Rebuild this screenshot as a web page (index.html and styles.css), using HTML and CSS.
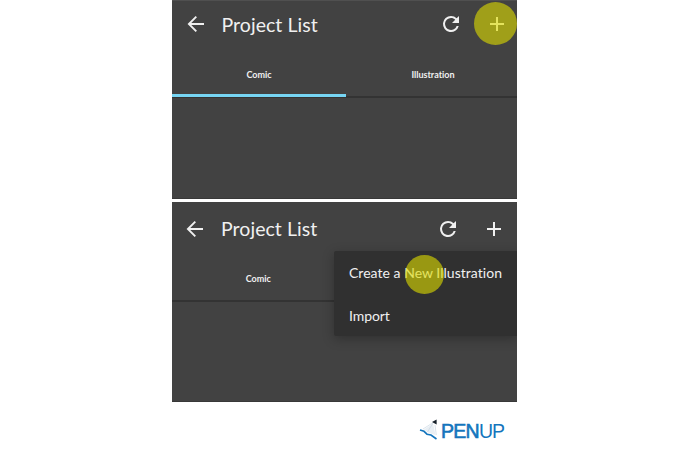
FILE: index.html
```html
<!DOCTYPE html>
<html lang="en">
<head>
<meta charset="utf-8">
<title>Project List</title>
<link rel="stylesheet" href="styles.css">
</head>
<body>
<svg width="0" height="0" class="defs">
  <symbol id="back" viewBox="0 0 24 24"><path d="M20 12H5M12.3 4.6L4.9 12l7.4 7.4" fill="none" stroke="currentColor" stroke-width="1.9"/></symbol>
  <symbol id="refresh" viewBox="0 0 24 24"><path fill="currentColor" d="M17.65 6.35A7.96 7.96 0 0 0 12 4a8 8 0 1 0 7.73 10h-2.08A6 6 0 1 1 12 6c1.66 0 3.14.69 4.22 1.78L13 11h7V4z"/></symbol>
  <symbol id="add" viewBox="0 0 24 24"><path d="M12 5v14M5 12h14" fill="none" stroke="currentColor" stroke-width="2"/></symbol>
</svg>
<main class="page">
  <section class="panel">
    <header class="bar">
      <svg class="icon"><use href="#back"/></svg>
      <h1 class="title">Project List</h1>
      <svg class="icon refresh"><use href="#refresh"/></svg>
      <span class="action"><svg class="icon"><use href="#add"/></svg><i class="touch touch-add"></i></span>
    </header>
    <nav class="tabs">
      <span class="tab active">Comic</span>
      <span class="tab">Illustration</span>
    </nav>
  </section>
  <section class="panel second">
    <header class="bar">
      <svg class="icon"><use href="#back"/></svg>
      <h1 class="title">Project List</h1>
      <svg class="icon refresh"><use href="#refresh"/></svg>
      <span class="action"><svg class="icon"><use href="#add"/></svg></span>
    </header>
    <nav class="tabs">
      <span class="tab">Comic</span>
      <span class="tab"></span>
    </nav>
    <div class="menu">
      <span class="item create">Create a New Illustration</span>
      <span class="item import">Import</span>
      <i class="touch touch-menu"></i>
    </div>
  </section>
  <footer class="brand">
    <svg class="logo" viewBox="0 0 20 22" width="20" height="22">
      <path d="M5 11.5L14 5.5L16.5 17L10 15Z" fill="#e9eff4"/>
      <path d="M14 5L8.5 14M13.5 5L4 11" stroke="#c3d2df" stroke-width=".6" fill="none"/>
      <path d="M16 7L17.3 17" stroke="#c3d2df" stroke-width=".6"/>
      <path d="M1 12L5 13.3L8 16.2L12 17L17.5 21" stroke="#1475bd" stroke-width="1.6" fill="none"/>
      <path d="M13 4L17.6 1.6V6.4Z" fill="#16202a"/>
    </svg>
    <span class="wordmark"><span class="pen">PEN</span>UP</span>
  </footer>
</main>
</body>
</html>
```
FILE: styles.css
```css
* { box-sizing: border-box; }
body {
  margin: 0;
  background: #fff;
  font-family: Lato, "Open Sans", sans-serif;
  font-variant-ligatures: none;
  color: #f0f0f0;
}
.defs { position: absolute; }
.page {
  width: 345px;
  height: 453px;
  margin-left: 172px;
  display: flex;
  flex-direction: column;
  gap: 3px;
}
.panel {
  position: relative;
  flex: none;
  height: 199px;
  background: #424242;
  overflow: hidden;
  border-top: 1px solid #505050;
  border-bottom: 1px solid #383838;
}
.second { height: 200px; border-top-color: #424242; }
.bar {
  height: 48px;
  display: flex;
  align-items: center;
  padding: 0 8px 2px 11.5px;
}
.second .bar { height: 53px; padding: 0 11px 2px; }
.icon { display: block; flex: none; width: 24px; height: 24px; }
.title {
  flex: 1;
  margin: 1px 0 0 14px;
  font-size: 19.5px;
  line-height: 24px;
  font-weight: 400;
  letter-spacing: .05px;
  white-space: nowrap;
}
.refresh { margin-right: 22px; }
.action { position: relative; }
.touch {
  position: absolute;
  border-radius: 50%;
  background: rgba(220, 219, 0, .61);
}
.touch-add { width: 43px; height: 43px; left: -11px; top: -10px; }
.tabs {
  height: 49px;
  display: flex;
  border-bottom: 2px solid #333;
}
.tab {
  flex: 1;
  text-align: center;
  font-size: 9px;
  line-height: 12px;
  font-weight: 700;
  padding: 20px 0 0 3px;
}
.active {
  flex: 0 0 174px;
  padding-left: 0;
  border-bottom: 3px solid #76d5f3;
  margin-bottom: -1px;
}
.second .tabs { height: 46px; }
.second .tab { padding: 17px 0 0; }
.menu {
  position: absolute;
  left: 162px;
  top: 48px;
  width: 183px;
  height: 85px;
  padding: 12px 0 0 15px;
  background: #303030;
  border-radius: 2px 0 0 2px;
  box-shadow: 0 3px 12px rgba(0, 0, 0, .28);
  display: flex;
  flex-direction: column;
  gap: 23px;
}
.item { font-size: 14px; line-height: 20px; white-space: nowrap; letter-spacing: .03px; }
.import { letter-spacing: -.1px; }
.touch-menu { width: 39px; height: 39px; left: 71px; top: 4px; }
.brand {
  display: flex;
  align-items: center;
  height: 22px;
  margin: 13px 0 0 247px;
}
.logo { flex: none; }
.wordmark {
  margin: 3px 0 0 2px;
  font: 19.5px/22px "Liberation Sans", sans-serif;
  color: #1475bd;
  letter-spacing: -1.2px;
}
.pen { -webkit-text-stroke: .6px #1475bd; letter-spacing: -.7px; }
```
